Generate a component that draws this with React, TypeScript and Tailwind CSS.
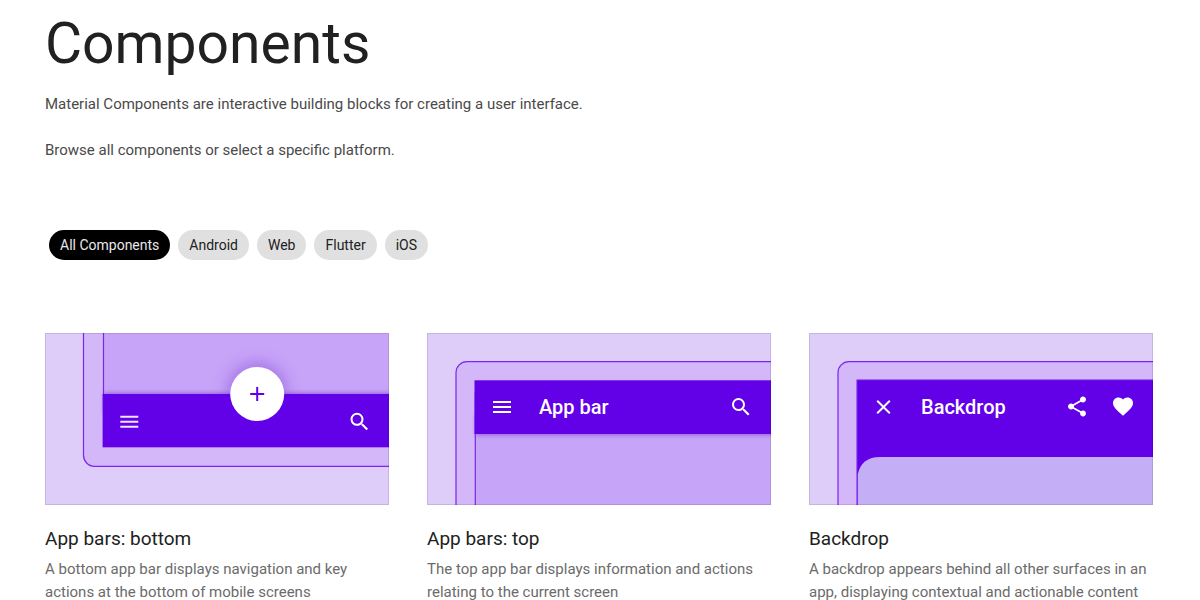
import { useState } from "react";
import type { ReactNode } from "react";

const MENU = "M3 18h18v-2H3v2zm0-5h18v-2H3v2zm0-7v2h18V6H3z";
const SEARCH =
  "M15.5 14h-.79l-.28-.27A6.471 6.471 0 0 0 16 9.5 6.5 6.5 0 1 0 9.5 16c1.61 0 3.09-.59 4.23-1.57l.27.28v.79l5 4.99L20.49 19l-4.99-5zm-6 0C7.01 14 5 11.99 5 9.5S7.01 5 9.5 5 14 7.01 14 9.5 11.99 14 9.5 14z";
const PLUS = "M19 13h-6v6h-2v-6H5v-2h6V5h2v6h6v2z";
const CLOSE =
  "M19 6.41L17.59 5 12 10.59 6.41 5 5 6.41 10.59 12 5 17.59 6.41 19 12 13.41 17.59 19 19 17.59 13.41 12z";
const SHARE =
  "M18 16.08c-.76 0-1.44.3-1.96.77L8.91 12.7c.05-.23.09-.46.09-.7s-.04-.47-.09-.7l7.05-4.11c.54.5 1.25.81 2.04.81 1.66 0 3-1.34 3-3s-1.34-3-3-3-3 1.34-3 3c0 .24.04.47.09.7L8.04 9.81C7.5 9.31 6.79 9 6 9c-1.66 0-3 1.34-3 3s1.34 3 3 3c.79 0 1.5-.31 2.04-.81l7.12 4.16c-.05.21-.08.43-.08.65 0 1.61 1.31 2.92 2.92 2.92s2.92-1.31 2.92-2.92-1.31-2.92-2.92-2.92z";
const HEART =
  "M12 21.35l-1.45-1.32C5.4 15.36 2 12.28 2 8.5 2 5.42 4.42 3 7.5 3c1.74 0 3.41.81 4.5 2.09C13.09 3.81 14.76 3 16.5 3 19.58 3 22 5.42 22 8.5c0 3.78-3.4 6.86-8.55 11.54L12 21.35z";

function Glyph({ d, x, y, fill = "#fff" }: { d: string; x: number; y: number; fill?: string }) {
  return <path d={d} fill={fill} transform={`translate(${x} ${y})`} />;
}

function Illustration({ children }: { children: ReactNode }) {
  return (
    <svg viewBox="0 0 344 172" className="block w-full" aria-hidden="true">
      <defs>
        <filter id="soft" x="-60%" y="-60%" width="220%" height="220%">
          <feGaussianBlur stdDeviation="8" />
        </filter>
        <filter id="edge" x="-5%" y="-20%" width="110%" height="140%">
          <feGaussianBlur stdDeviation="2" />
        </filter>
      </defs>
      <rect width="344" height="172" fill="#decdf9" />
      {children}
      <rect x="0.5" y="0.5" width="343" height="171" fill="none" stroke="#000" strokeOpacity="0.11" />
    </svg>
  );
}

function BottomBarArt() {
  return (
    <Illustration>
      <path d="M38.5 -2V122a11 11 0 0 0 11 11.3H350V-2z" fill="#d3b7f8" stroke="#7a26ee" strokeWidth="1.2" />
      <path d="M58.5 -2V62H350V-2z" fill="#c8a4f8" stroke="#7a26ee" strokeWidth="1.2" />
      <rect x="59" y="60" width="290" height="20" fill="#5a1fb0" opacity="0.5" filter="url(#edge)" />
      <circle cx="212" cy="59" r="30" fill="#6a2bc8" opacity="0.38" filter="url(#soft)" />
      <rect x="57.6" y="61" width="290" height="53.3" fill="#6200e8" />
      <circle cx="212.2" cy="61" r="27" fill="#fff" />
      <Glyph d={PLUS} x={200.2} y={49} fill="#6200ee" />
      <Glyph d={MENU} x={72.3} y={76.8} fill="#efe4fd" />
      <Glyph d={SEARCH} x={302.5} y={76.8} />
    </Illustration>
  );
}

function TopBarArt() {
  return (
    <Illustration>
      <path d="M350 28.7H40a11 11 0 0 0 -11 11V180H350z" fill="#d3b7f8" stroke="#7a26ee" strokeWidth="1.2" />
      <path d="M48.3 60V180H350V60z" fill="#c6a4f7" stroke="#7a26ee" strokeWidth="1.2" />
      <rect x="49" y="82" width="300" height="20" fill="#5a1fb0" opacity="0.5" filter="url(#edge)" />
      <rect x="47.5" y="47.3" width="300" height="53.7" fill="#6200e8" />
      <Glyph d={MENU} x={63} y={62} />
      <text x="112" y="81" fill="#fff" className="font-[Roboto,sans-serif] text-[20px] font-medium">
        App bar
      </text>
      <Glyph d={SEARCH} x={302} y={62} />
    </Illustration>
  );
}

function BackdropArt() {
  return (
    <Illustration>
      <path d="M350 28.7H40a11 11 0 0 0 -11 11V180H350z" fill="#d3b7f8" stroke="#7a26ee" strokeWidth="1.2" />
      <path d="M48.1 47.1V180H350V47.1z" fill="#6200e8" stroke="#6f14ea" strokeWidth="1.2" />
      <path d="M48.8 180V141q4 -17 22 -17H350V180z" fill="#c4aff6" />
      <Glyph d={CLOSE} x={62.5} y={62} />
      <text x="112" y="81" fill="#fff" className="font-[Roboto,sans-serif] text-[20px] font-medium">
        Backdrop
      </text>
      <Glyph d={SHARE} x={256} y={61.5} />
      <Glyph d={HEART} x={302} y={61.5} />
    </Illustration>
  );
}

const platforms = ["All Components", "Android", "Web", "Flutter", "iOS"];

const components = [
  {
    title: "App bars: bottom",
    text: "A bottom app bar displays navigation and key actions at the bottom of mobile screens",
    art: <BottomBarArt />,
  },
  {
    title: "App bars: top",
    text: "The top app bar displays information and actions relating to the current screen",
    art: <TopBarArt />,
  },
  {
    title: "Backdrop",
    text: "A backdrop appears behind all other surfaces in an app, displaying contextual and actionable content",
    art: <BackdropArt />,
  },
];

export default function App() {
  const [platform, setPlatform] = useState(platforms[0]);

  return (
    <main className="bg-white pt-3 pr-[47px] pl-[45px] font-[Roboto,sans-serif] text-[#212121]">
      <h1 className="text-[57px] leading-[64px]">Components</h1>
      <p className="mt-4 text-[15px] leading-6 text-[#4a4a4a]">
        Material Components are interactive building blocks for creating a user interface.
      </p>
      <p className="mt-[22px] text-[15px] leading-6 text-[#4a4a4a]">
        Browse all components or select a specific platform.
      </p>

      <div className="mt-17 flex flex-wrap gap-2 pl-1">
        {platforms.map((name) => (
          <button
            key={name}
            type="button"
            aria-pressed={name === platform}
            onClick={() => setPlatform(name)}
            className={
              name === platform
                ? "rounded-full bg-black px-[11px] text-[14px] leading-[30px] text-[#e8e8e8]"
                : "rounded-full bg-[#e0e0e0] px-[11px] text-[14px] leading-[30px] text-[#212121]"
            }
          >
            {name}
          </button>
        ))}
      </div>

      <section className="mt-[73px] grid grid-cols-3 gap-x-[38px]">
        {components.map(({ title, text, art }) => (
          <article key={title}>
            {art}
            <h2 className="mt-[22px] text-[19px] leading-6">{title}</h2>
            <p className="mt-[7px] text-[15px] leading-[23px] text-[#6b6b6b]">{text}</p>
          </article>
        ))}
      </section>
    </main>
  );
}
